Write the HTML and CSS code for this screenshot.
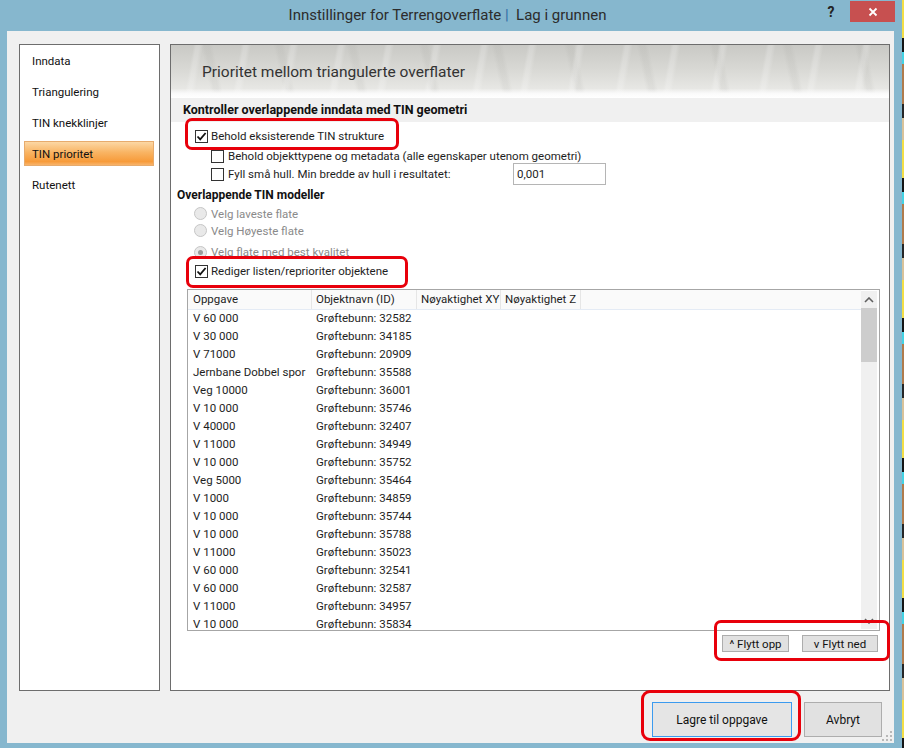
FILE: index.html
```html
<!DOCTYPE html>
<html>
<head>
<meta charset="utf-8">
<link rel="stylesheet" href="styles.css">
</head>
<body>
<div class="screen">
  <div class="window">
    <div class="titlebar">
      <div></div>
      <div class="title">Innstillinger for Terrengoverflate <span class="sep">|</span>&nbsp; Lag i grunnen</div>
      <div class="tb-right">
        <span class="help">?</span>
        <span class="close"><svg width="12" height="12" viewBox="0 0 12 12"><path d="M2.5 2.5 L9.5 9.5 M9.5 2.5 L2.5 9.5" stroke="#fff" stroke-width="1.8"/></svg></span>
      </div>
    </div>
    <div class="client">
      <div class="main">
        <nav class="nav">
          <div class="nav-item">Inndata</div>
          <div class="nav-item">Triangulering</div>
          <div class="nav-item">TIN knekklinjer</div>
          <div class="nav-item sel">TIN prioritet</div>
          <div class="nav-item">Rutenett</div>
        </nav>
        <section class="panel">
          <div class="banner"><h1>Prioritet mellom triangulerte overflater</h1></div>
          <div class="band">Kontroller overlappende inndata med TIN geometri</div>
          <div class="row r1 mark-a"><span class="cb"><svg width="11" height="11" viewBox="0 0 11 11"><path d="M1.5 5.5 L4.2 8.3 L9.6 2" fill="none" stroke="#111" stroke-width="1.8"/></svg></span><span>Behold eksisterende TIN strukture</span></div>
          <div class="row sub r2"><span class="cb"></span><span>Behold objekttypene og metadata (alle egenskaper utenom geometri)</span></div>
          <div class="row sub r3"><span class="cb"></span><span class="lbl">Fyll små hull. Min bredde av hull i resultatet:</span><span class="input">0,001</span></div>
          <div class="heading">Overlappende TIN modeller</div>
          <div class="row radio rd1"><span class="rb"></span><span>Velg laveste flate</span></div>
          <div class="row radio rd2"><span class="rb"></span><span>Velg Høyeste flate</span></div>
          <div class="row radio rd3"><span class="rb on"></span><span>Velg flate med best kvalitet</span></div>
          <div class="row r4 mark-b"><span class="cb"><svg width="11" height="11" viewBox="0 0 11 11"><path d="M1.5 5.5 L4.2 8.3 L9.6 2" fill="none" stroke="#111" stroke-width="1.8"/></svg></span><span>Rediger listen/reprioriter objektene</span></div>
          <div class="list">
            <div class="lv">
              <div class="lv-head"><span class="c c1">Oppgave</span><span class="c c2">Objektnavn (ID)</span><span class="c c3">Nøyaktighet XY</span><span class="c c4">Nøyaktighet Z</span></div>
              <div class="lv-body">
                <div class="lr"><span class="c c1">V 60 000</span><span class="c c2">Grøftebunn: 32582</span></div>
                <div class="lr"><span class="c c1">V 30 000</span><span class="c c2">Grøftebunn: 34185</span></div>
                <div class="lr"><span class="c c1">V 71000</span><span class="c c2">Grøftebunn: 20909</span></div>
                <div class="lr"><span class="c c1">Jernbane Dobbel spor</span><span class="c c2">Grøftebunn: 35588</span></div>
                <div class="lr"><span class="c c1">Veg 10000</span><span class="c c2">Grøftebunn: 36001</span></div>
                <div class="lr"><span class="c c1">V 10 000</span><span class="c c2">Grøftebunn: 35746</span></div>
                <div class="lr"><span class="c c1">V 40000</span><span class="c c2">Grøftebunn: 32407</span></div>
                <div class="lr"><span class="c c1">V 11000</span><span class="c c2">Grøftebunn: 34949</span></div>
                <div class="lr"><span class="c c1">V 10 000</span><span class="c c2">Grøftebunn: 35752</span></div>
                <div class="lr"><span class="c c1">Veg 5000</span><span class="c c2">Grøftebunn: 35464</span></div>
                <div class="lr"><span class="c c1">V 1000</span><span class="c c2">Grøftebunn: 34859</span></div>
                <div class="lr"><span class="c c1">V 10 000</span><span class="c c2">Grøftebunn: 35744</span></div>
                <div class="lr"><span class="c c1">V 10 000</span><span class="c c2">Grøftebunn: 35788</span></div>
                <div class="lr"><span class="c c1">V 11000</span><span class="c c2">Grøftebunn: 35023</span></div>
                <div class="lr"><span class="c c1">V 60 000</span><span class="c c2">Grøftebunn: 32541</span></div>
                <div class="lr"><span class="c c1">V 60 000</span><span class="c c2">Grøftebunn: 32587</span></div>
                <div class="lr"><span class="c c1">V 11000</span><span class="c c2">Grøftebunn: 34957</span></div>
                <div class="lr"><span class="c c1">V 10 000</span><span class="c c2">Grøftebunn: 35834</span></div>
              </div>
            </div>
            <div class="vscroll">
              <span class="arrow"><svg width="10" height="6" viewBox="0 0 10 6"><path d="M1 5 L5 1 L9 5" fill="none" stroke="#606060" stroke-width="1.6"/></svg></span>
              <span class="thumb"></span>
              <span class="track"></span>
              <span class="arrow"><svg width="10" height="6" viewBox="0 0 10 6"><path d="M1 1 L5 5 L9 1" fill="none" stroke="#606060" stroke-width="1.6"/></svg></span>
            </div>
          </div>
          <div class="move">
            <div class="move-group mark-c">
              <button class="btn b-up">^ Flytt opp</button>
              <button class="btn b-dn">v Flytt ned</button>
            </div>
          </div>
        </section>
      </div>
      <div class="footer">
        <button class="btn big save mark-d">Lagre til oppgave</button>
        <button class="btn big cancel">Avbryt</button>
      </div>
      <span class="grip"><svg width="10" height="10" viewBox="0 0 10 10"><g fill="#b8b8b8"><rect x="8" y="0" width="2" height="2"/><rect x="4" y="4" width="2" height="2"/><rect x="8" y="4" width="2" height="2"/><rect x="0" y="8" width="2" height="2"/><rect x="4" y="8" width="2" height="2"/><rect x="8" y="8" width="2" height="2"/></g></svg></span>
    </div>
  </div>
  <div class="desk"></div>
</div>
</body>
</html>
```
FILE: styles.css
```css
* { box-sizing: border-box; margin: 0; padding: 0; }
html, body { width: 904px; height: 748px; overflow: hidden; }
body {
  background: #1b1b1b;
  font-family: Roboto, "Liberation Sans", sans-serif;
  font-size: 11.5px;
  color: #1e1e1e;
}
.screen { display: flex; height: 748px; }
.window {
  width: 902px;
  height: 748px;
  background: #86b7ce;
  display: flex;
  flex-direction: column;
}
.desk {
  width: 2px;
  height: 748px;
  background: repeating-linear-gradient(180deg, #f2de46 0 38px, #151515 38px 52px, #44d3e4 52px 64px, #b07b4c 64px 104px, #262626 104px 118px, #d8c29a 118px 140px);
}

/* title bar */
.titlebar {
  height: 31px;
  display: grid;
  grid-template-columns: 1fr auto 1fr;
  padding-right: 7px;
}
.title {
  font-size: 15px;
  line-height: 31px;
  color: #2c2c2c;
  white-space: nowrap;
}
.sep { color: #2f6aa5; }
.tb-right {
  display: flex;
  justify-content: flex-end;
  align-items: flex-start;
}
.help {
  width: 12px;
  margin-top: 4px;
  margin-right: 13px;
  font-size: 14px;
  font-weight: bold;
  color: #222;
  text-align: center;
}
.close {
  width: 45px;
  height: 21px;
  margin-top: 1px;
  background: #c75050;
  display: flex;
  align-items: center;
  justify-content: center;
}

/* client area */
.client {
  flex: 1;
  margin: 0 8px 5px 7px;
  background: #f0f0f0;
  display: flex;
  flex-direction: column;
  padding: 13px 4px 6px 12px;
  position: relative;
}
.main {
  display: flex;
  gap: 10px;
  height: 647px;
}

/* navigation */
.nav {
  width: 141px;
  flex: none;
  background: #fff;
  border: 1px solid #6d6d6d;
  padding: 3px 5px 0 4px;
}
.nav-item {
  height: 25px;
  line-height: 25px;
  padding-left: 7px;
  margin-bottom: 6px;
  border: 1px solid transparent;
  color: #111;
}
.nav-item.sel {
  background: linear-gradient(180deg, #fcd7a4 0%, #f9b463 45%, #f79b3a 85%, #f8b46c 100%);
  border-color: #e7ab6d;
}

/* right panel */
.panel {
  flex: 1;
  background: #fff;
  border: 1px solid #6d6d6d;
  display: flex;
  flex-direction: column;
  position: relative;
}
.banner {
  height: 53px;
  padding: 16px 0 0 31px;
  background:
    linear-gradient(180deg, rgba(255,255,255,0) 0%, rgba(255,255,255,0) 82%, #fbfbfb 92%, #ffffff 100%),
    repeating-linear-gradient(100deg, rgba(255,255,255,0) 0 22px, rgba(255,255,255,0.2) 25px 28px, rgba(255,255,255,0) 32px 47px),
    repeating-linear-gradient(78deg, rgba(150,150,145,0) 0 40px, rgba(150,150,145,0.1) 44px 48px, rgba(150,150,145,0) 52px 71px),
    linear-gradient(180deg, #c9c9c5 0%, #d8d8d4 45%, #e6e6e3 80%, #eeeeec 100%);
}
.banner h1 {
  font-size: 15.5px;
  font-weight: normal;
  color: #333;
  line-height: 22px;
}
.band {
  height: 24px;
  line-height: 24px;
  background: #f0f0f0;
  padding-left: 12px;
  font-size: 12.5px;
  font-weight: bold;
  color: #111;
}
.row {
  display: flex;
  align-items: center;
  white-space: nowrap;
  position: relative;
}
.cb {
  width: 13px;
  height: 13px;
  flex: none;
  border: 1px solid #333;
  background: #fff;
  display: flex;
  align-items: center;
  justify-content: center;
}
.r1 { height: 20px; margin-top: 4px; padding-left: 24px; gap: 3px; }
.sub { height: 18px; padding-left: 40px; gap: 4px; }
.r2 { margin-top: 1px; }
.lbl { width: 281px; flex: none; }
.input {
  width: 93px;
  height: 22px;
  flex: none;
  border: 1px solid #b5b5b5;
  background: #fff;
  line-height: 20px;
  padding-left: 3px;
}
.heading {
  height: 19px;
  line-height: 19px;
  margin-top: 3px;
  padding-left: 6px;
  font-size: 12px;
  font-weight: bold;
  color: #111;
}
.radio { height: 17px; padding-left: 23px; gap: 4px; color: #8a8a8a; }
.rd3 { height: 18px; margin-top: 4px; }
.rb {
  width: 13px;
  height: 13px;
  flex: none;
  border-radius: 50%;
  border: 1px solid #c6c6c6;
  background: #e9e9e9;
  display: flex;
  align-items: center;
  justify-content: center;
}
.rb.on::after {
  content: "";
  width: 5px;
  height: 5px;
  border-radius: 50%;
  background: #9a9a9a;
}
.r4 { height: 20px; padding-left: 24px; gap: 3px; }

/* red annotation marks */
.mark-a::after, .mark-b::after, .mark-c::after, .mark-d::after {
  content: "";
  position: absolute;
  border: 3px solid #e8000b;
  border-radius: 7px;
  pointer-events: none;
}
.mark-a::after { left: 14px; top: -8px; width: 208px; height: 26px; }
.mark-b::after { left: 15px; top: -5px; width: 216px; height: 26px; }
.mark-c { position: relative; }
.mark-c::after { left: -8px; top: -15px; right: -12px; bottom: -9px; }
.mark-d { position: relative; }
.mark-d::after { left: -12px; top: -13px; right: -10px; bottom: -5px; border-radius: 9px; }

/* list view */
.list {
  margin: 8px 9px 0 16px;
  height: 342px;
  border: 1px solid #a6a6a6;
  display: flex;
  padding-right: 2px;
  overflow: hidden;
}
.lv { flex: 1; overflow: hidden; }
.lv-head {
  height: 20px;
  background: #fafafa;
  border-bottom: 1px solid #e4ebf5;
  display: flex;
}
.lv-head .c { border-right: 1px solid #e6e6e6; line-height: 19px; }
.c { flex: none; padding-left: 4px; white-space: nowrap; overflow: hidden; }
.c1 { width: 124px; padding-left: 5px; }
.c2 { width: 105px; }
.c3 { width: 84px; }
.c4 { width: 80px; }
.lr { height: 18px; padding-top: 3px; display: flex; align-items: flex-start; }
.lr .c { line-height: 11px; height: 11px; overflow: visible; }
.vscroll {
  width: 16px;
  flex: none;
  margin: 1px 0;
  background: #f0f0f0;
  display: flex;
  flex-direction: column;
}
.arrow {
  height: 17px;
  flex: none;
  display: flex;
  align-items: center;
  justify-content: center;
}
.thumb { height: 54px; flex: none; background: #cdcdcd; }
.track { flex: 1; }

/* buttons */
.btn {
  font-family: inherit;
  font-size: 11.5px;
  color: #111;
  background: #e1e1e1;
  border: 1px solid #adadad;
}
.move {
  display: flex;
  justify-content: flex-end;
  padding-right: 11px;
  margin-top: 4px;
}
.move-group { display: flex; gap: 13px; }
.move .btn { height: 17px; line-height: 14px; padding: 0; }
.b-up { width: 67px; }
.b-dn { width: 76px; }
.footer {
  display: flex;
  justify-content: flex-end;
  gap: 12px;
  margin-top: 11px;
  padding-right: 8px;
}
.big { height: 35px; font-size: 12px; }
.save { width: 140px; border-color: #3c9bef; background: #e5e5e5; }
.cancel { width: 78px; }
.grip {
  position: absolute;
  right: 2px;
  bottom: 2px;
  width: 10px;
  height: 10px;
  display: flex;
}
```
